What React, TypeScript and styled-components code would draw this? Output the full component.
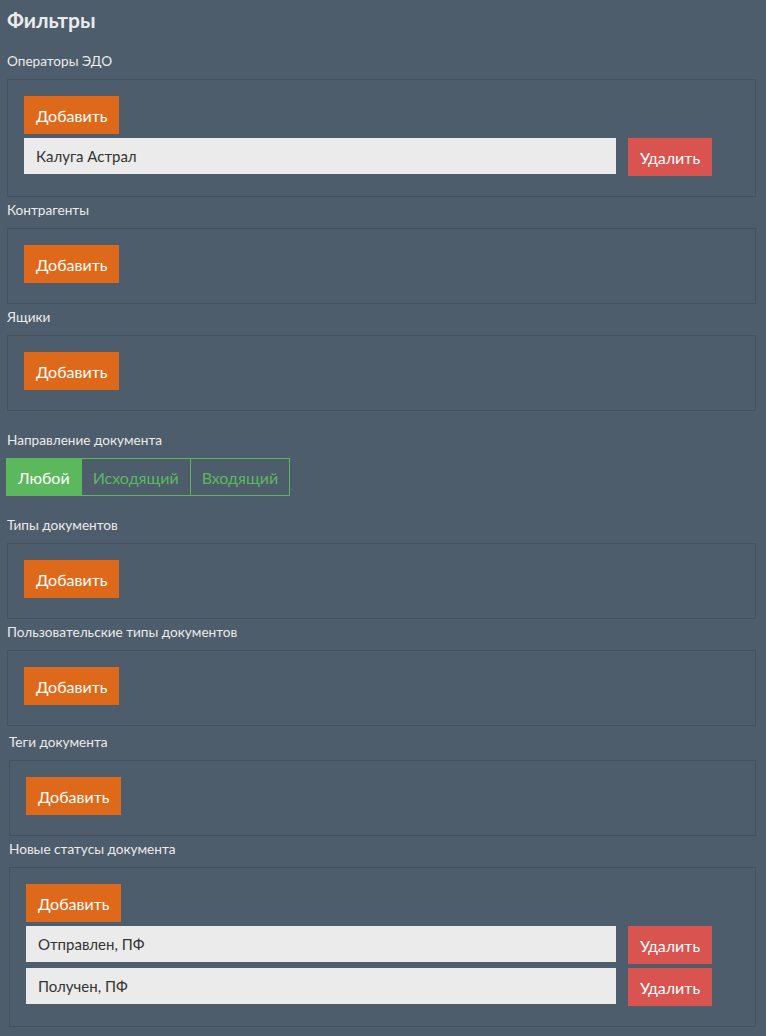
import React, { useState } from "react";
import styled, { createGlobalStyle } from "styled-components";

const GlobalStyle = createGlobalStyle`
  html, body {
    margin: 0;
    padding: 0;
    background: #4e5d6c;
  }
  body {
    font-family: Lato, "Open Sans", "Liberation Sans", sans-serif;
    color: #ebebeb;
    -webkit-font-smoothing: antialiased;
  }
  * { box-sizing: border-box; }
`;

const Page = styled.div`
  padding: 9px 10px 10px 7px;
  min-height: 1036px;
`;

const Heading = styled.h2`
  margin: 0 0 17px;
  font-size: 21px;
  line-height: 22px;
  font-weight: 700;
  color: #ebebeb;
`;

const Section = styled.section<{ $shift?: number; $gap?: number }>`
  margin-left: ${(p) => p.$shift ?? 0}px;
  margin-top: ${(p) => p.$gap ?? 0}px;
`;

const Label = styled.div`
  padding-top: 4px;
  margin-bottom: 9px;
  font-size: 13.6px;
  line-height: 18px;
  color: #ebebeb;
`;

const Box = styled.div`
  display: flex;
  flex-direction: column;
  align-items: flex-start;
  gap: 4px;
  border: 1px solid #45525e;
  padding: 16px 16px 20px;
`;

const Row = styled.div`
  align-self: stretch;
  display: grid;
  grid-template-columns: minmax(0, 1fr) 111px;
  column-gap: 12px;
  align-items: start;
`;

const Btn = styled.button<{ $tone: "warning" | "danger" }>`
  display: inline-flex;
  align-items: center;
  justify-content: center;
  height: 38px;
  padding: 0 12px;
  border: none;
  border-radius: 0;
  font-family: inherit;
  font-size: 16px;
  color: #ffffff;
  background: ${(p) => (p.$tone === "warning" ? "#df691a" : "#d9534f")};
  cursor: pointer;
`;

const DelBtn = styled(Btn)`
  justify-self: start;
`;

const Field = styled.div`
  height: 36px;
  display: flex;
  align-items: center;
  padding: 0 12px;
  background: #ebebeb;
  color: #333333;
  font-size: 15px;
`;

const Toggle = styled.div`
  display: flex;
  margin-left: -1px;
`;

const ToggleBtn = styled.button<{ $active: boolean }>`
  height: 38px;
  padding: 0 11px;
  border: 1px solid #5cb85c;
  margin-left: -1px;
  border-radius: 0;
  font-family: inherit;
  font-size: 16px;
  background: ${(p) => (p.$active ? "#5cb85c" : "transparent")};
  color: ${(p) => (p.$active ? "#ffffff" : "#5cb85c")};
  cursor: pointer;
  &:first-child { margin-left: 0; }
`;

const DirectionGroup = styled.div`
  margin-top: 16px;
  margin-bottom: 16px;
`;

type Filter = { title: string; items: string[]; shift?: number; gap?: number };

const FilterBox: React.FC<Filter> = ({ title, items, shift, gap }) => (
  <Section $shift={shift} $gap={gap}>
    <Label>{title}</Label>
    <Box>
      <Btn $tone="warning">Добавить</Btn>
      {items.map((it) => (
        <Row key={it}>
          <Field>{it}</Field>
          <DelBtn $tone="danger">Удалить</DelBtn>
        </Row>
      ))}
    </Box>
  </Section>
);

export default function App() {
  const [dir, setDir] = useState("Любой");
  const dirs = ["Любой", "Исходящий", "Входящий"];
  return (
    <>
      <GlobalStyle />
      <Page>
        <Heading>Фильтры</Heading>
        <FilterBox title="Операторы ЭДО" items={["Калуга Астрал"]} />
        <FilterBox title="Контрагенты" items={[]} />
        <FilterBox title="Ящики" items={[]} />
        <DirectionGroup>
          <Label>Направление документа</Label>
          <Toggle>
            {dirs.map((d) => (
              <ToggleBtn key={d} $active={dir === d} onClick={() => setDir(d)}>
                {d}
              </ToggleBtn>
            ))}
          </Toggle>
        </DirectionGroup>
        <FilterBox title="Типы документов" items={[]} />
        <FilterBox title="Пользовательские типы документов" items={[]} />
        <FilterBox title="Теги документа" items={[]} shift={2} gap={3} />
        <FilterBox
          title="Новые статусы документа"
          items={["Отправлен, ПФ", "Получен, ПФ"]}
          shift={2}
        />
      </Page>
    </>
  );
}
